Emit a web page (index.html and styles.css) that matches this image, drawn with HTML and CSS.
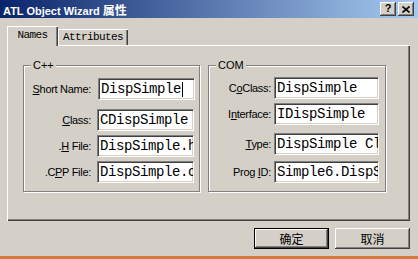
FILE: index.html
```html
<!DOCTYPE html>
<html lang="zh-CN">
<head>
    <meta charset="UTF-8">
    <title>ATL Object Wizard 属性</title>
    <link rel="stylesheet" href="styles.css">
</head>
<body>

    <div class="window">

        <div class="titlebar">
            <span class="title">ATL Object Wizard <span class="cjk">属性</span></span>
            <div class="caption-btns">
                <span class="cbtn help">?</span>
                <span class="cbtn close">
                    <svg width="8" height="7" viewBox="0 0 8 7">
                        <path d="M0.5 0.5 L7.5 6.5 M7.5 0.5 L0.5 6.5" stroke="#000" stroke-width="1.6" fill="none"/>
                    </svg>
                </span>
            </div>
        </div>

        <div class="content">

            <div class="tabs">
                <div class="tab active">Names</div>
                <div class="tab">Attributes</div>
            </div>

            <div class="panel">

                <div class="group cpp">
                    <span class="group-title">C++</span>
                    <div class="row r1">
                        <span class="label"><u>S</u>hort Name:</span>
                        <div class="edit wide">DispSimple<span class="caret"></span></div>
                    </div>
                    <div class="row r2">
                        <span class="label"><u>C</u>lass:</span>
                        <div class="edit">CDispSimple</div>
                    </div>
                    <div class="row r3">
                        <span class="label">.<u>H</u> File:</span>
                        <div class="edit">DispSimple.h</div>
                    </div>
                    <div class="row r3">
                        <span class="label">.C<u>P</u>P File:</span>
                        <div class="edit">DispSimple.cpp</div>
                    </div>
                </div>

                <div class="group com">
                    <span class="group-title">COM</span>
                    <div class="row c1">
                        <span class="label">C<u>o</u>Class:</span>
                        <div class="edit">DispSimple</div>
                    </div>
                    <div class="row c2">
                        <span class="label">I<u>n</u>terface:</span>
                        <div class="edit">IDispSimple</div>
                    </div>
                    <div class="row c3">
                        <span class="label"><u>T</u>ype:</span>
                        <div class="edit">DispSimple Class</div>
                    </div>
                    <div class="row c4">
                        <span class="label">Prog <u>I</u>D:</span>
                        <div class="edit">Simple6.DispSimple</div>
                    </div>
                </div>

            </div>

            <div class="buttons">
                <div class="btn default">确定</div>
                <div class="btn">取消</div>
            </div>

        </div>
    </div>

    <div class="taskbar"></div>

</body>
</html>
```

FILE: styles.css
```css
body {
    margin: 0;
    width: 418px;
    height: 259px;
    overflow: hidden;
    background: #d4d0c8;
    font-family: "Liberation Sans", Arial, sans-serif;
    font-size: 11px;
    color: #000;
}

.window {
    height: 256px;
    background: #d4d0c8;
}

/* title bar */
.titlebar {
    height: 18px;
    display: flex;
    align-items: center;
    justify-content: space-between;
    padding: 0 4px 0 3px;
    background: linear-gradient(to right, #0a246a, #a6caf0);
    color: #fff;
    font-weight: bold;
}

.title {
    font-size: 11px;
    white-space: nowrap;
}

.title .cjk {
    font-family: "Noto Sans CJK SC", sans-serif;
    font-size: 12px;
}

.caption-btns {
    display: flex;
    gap: 2px;
}

.cbtn {
    width: 16px;
    height: 14px;
    box-sizing: border-box;
    display: flex;
    align-items: center;
    justify-content: center;
    background: #d4d0c8;
    color: #000;
    box-shadow: inset -1px -1px #404040, inset 1px 1px #fff, inset -2px -2px #808080;
}

.cbtn.help {
    font-size: 11px;
    font-weight: bold;
    line-height: 1;
    padding-bottom: 1px;
}

/* body */
.content {
    padding: 8px 8px 0 7px;
}

.tabs {
    display: flex;
    align-items: flex-end;
    height: 20px;
    margin-bottom: -1px;
    position: relative;
    z-index: 1;
}

.tab {
    width: 70px;
    height: 16px;
    margin-bottom: 1px;
    box-sizing: border-box;
    display: flex;
    align-items: center;
    justify-content: center;
    background: #d4d0c8;
    box-shadow: inset 1px 1px #fff, inset -1px 0 #404040, inset -2px 0 #808080;
    font-family: "Liberation Mono", "Courier New", monospace;
    font-size: 11px;
    letter-spacing: -0.6px;
}

.tab.active {
    width: 51px;
    height: 20px;
    margin-bottom: 0;
    padding-bottom: 3px;
}

.panel {
    height: 176px;
    box-sizing: border-box;
    display: flex;
    align-items: flex-start;
    padding: 20px 0 0 16px;
    box-shadow: inset 1px 1px #fff, inset -1px -1px #404040, inset -2px -2px #808080;
}

/* group boxes */
.group {
    position: relative;
    height: 127px;
    box-sizing: border-box;
    border: 1px solid #808080;
    box-shadow: inset 1px 1px #fff, 1px 1px #fff;
}

.group.cpp {
    width: 177px;
}

.group.com {
    width: 178px;
    margin-left: 8px;
}

.group-title {
    position: absolute;
    top: -7px;
    left: 7px;
    padding: 0 2px;
    background: #d4d0c8;
    line-height: 12px;
}

.row {
    display: flex;
    align-items: center;
}

.cpp .label {
    width: 67px;
    margin-right: 6px;
}

.com .label {
    width: 62px;
    margin-right: 3px;
}

.label {
    text-align: right;
    letter-spacing: -0.3px;
    white-space: nowrap;
}

.cpp .r1 { margin-top: 12px; }
.cpp .r2 { margin-top: 9px; }
.cpp .r3 { margin-top: 4px; }

.com .c1 { margin-top: 11px; }
.com .c2 { margin-top: 4px; }
.com .c3 { margin-top: 8px; }
.com .c4 { margin-top: 6px; }

.edit {
    width: 97px;
    height: 22px;
    box-sizing: border-box;
    padding-left: 2px;
    display: flex;
    align-items: center;
    overflow: hidden;
    white-space: nowrap;
    background: #fff;
    border: 1px solid;
    border-color: #808080 #fff #fff #808080;
    box-shadow: inset 1px 1px #404040, inset -1px -1px #d4d0c8;
    font-family: "Liberation Mono", "Courier New", monospace;
    font-size: 14px;
    letter-spacing: -0.4px;
}

.com .edit {
    width: 105px;
}

.edit.wide {
    width: 97px;
    margin-left: 1px;
}

.caret {
    display: inline-block;
    width: 0;
    height: 15px;
    border-left: 1px solid #000;
    margin-left: 1px;
}

/* dialog buttons */
.buttons {
    display: flex;
    justify-content: flex-end;
    gap: 6px;
    margin-top: 7px;
}

.btn {
    width: 75px;
    height: 21px;
    box-sizing: border-box;
    display: flex;
    align-items: center;
    justify-content: center;
    background: #d4d0c8;
    box-shadow: inset -1px -1px #404040, inset 1px 1px #fff, inset -2px -2px #808080;
    font-family: "Noto Sans CJK SC", sans-serif;
    font-size: 12px;
}

.btn.default {
    border: 1px solid #000;
}

.taskbar {
    height: 3px;
    background: #d8773e;
}
```
